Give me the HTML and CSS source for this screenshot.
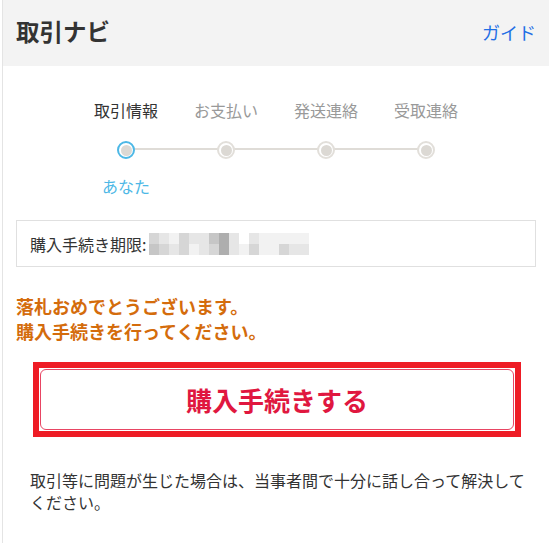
FILE: index.html
```html
<!DOCTYPE html>
<html lang="ja">
<head>
<meta charset="utf-8">
<title>取引ナビ</title>
<link rel="stylesheet" href="styles.css">
</head>
<body>
<div class="panel">
  <header class="head">
    <h1 class="title">取引ナビ</h1>
    <a class="guide" href="#">ガイド</a>
  </header>
  <main class="content">
    <ol class="steps">
      <li class="step active">
        <span class="label">取引情報</span>
        <span class="dot"></span>
        <span class="you">あなた</span>
      </li>
      <li class="step">
        <span class="label">お支払い</span>
        <span class="dot"></span>
      </li>
      <li class="step">
        <span class="label">発送連絡</span>
        <span class="dot"></span>
      </li>
      <li class="step last">
        <span class="label">受取連絡</span>
        <span class="dot"></span>
      </li>
    </ol>

    <div class="deadline">
      <span class="deadline-label">購入手続き期限:</span>
      <span class="mosaic">
        <i class="c3"></i><i class="c2"></i><i class="c1"></i><i class="c3"></i><i class="c2"></i><i class="c2"></i><i class="c4"></i><i class="c5"></i><i class="c2"></i><i class="c0"></i><i class="c2"></i><i class="c1"></i><i class="c1"></i><i class="c1"></i><i class="c1"></i><i class="c1"></i>
        <i class="c4"></i><i class="c3"></i><i class="c2"></i><i class="c3"></i><i class="c1"></i><i class="c2"></i><i class="c3"></i><i class="c5"></i><i class="c2"></i><i class="c1"></i><i class="c3"></i><i class="c1"></i><i class="c1"></i><i class="c3"></i><i class="c2"></i><i class="c2"></i>
      </span>
    </div>

    <p class="congrats">落札おめでとうございます。<br>購入手続きを行ってください。</p>

    <div class="action">
      <button class="buy" type="button">購入手続きする</button>
    </div>

    <p class="note">取引等に問題が生じた場合は、当事者間で十分に話し合って解決してください。</p>
  </main>
</div>
</body>
</html>
```

FILE: styles.css
```css
* { box-sizing: border-box; }
html, body { margin: 0; padding: 0; background: #fff; }
body {
  font-family: "Noto Sans CJK JP", "Noto Sans", "Liberation Sans", sans-serif;
  color: #333;
}
.panel {
  margin-left: 2px;
  border-left: 1px solid #e4e4e4;
  min-height: 543px;
}
.head {
  height: 66px;
  background: #f3f3f3;
  display: flex;
  align-items: center;
  justify-content: space-between;
  padding: 0 13px 2px 13px;
}
.title {
  margin: 0;
  font-size: 23.5px;
  font-weight: bold;
  color: #333;
  line-height: 1;
}
.guide {
  font-size: 18px;
  color: #1f6fe5;
  text-decoration: none;
  line-height: 1;
}
.content {
  padding: 0 13px;
}
.steps {
  list-style: none;
  margin: 0 auto;
  padding: 33px 0 0;
  display: flex;
  width: 400px;
}
.step {
  position: relative;
  width: 100px;
  display: flex;
  flex-direction: column;
  align-items: center;
}
.label {
  font-size: 16px;
  line-height: 22px;
  color: #999;
  white-space: nowrap;
}
.step.active .label { color: #333; }
.step::after {
  content: "";
  position: absolute;
  left: 50%;
  width: 100px;
  top: 49px;
  height: 2px;
  background: #dfdcd7;
}
.step.last::after { display: none; }
.dot {
  position: relative;
  z-index: 1;
  margin-top: 20px;
  width: 18px;
  height: 18px;
  border-radius: 50%;
  border: 2px solid #e2dfda;
  background: #fff;
  display: flex;
  align-items: center;
  justify-content: center;
}
.dot::before {
  content: "";
  width: 11px;
  height: 11px;
  border-radius: 50%;
  background: #dcd9d4;
}
.step.active .dot { border-color: #4db8e6; }
.you {
  margin-top: 16px;
  font-size: 16px;
  line-height: 22px;
  color: #4db8e6;
}
.deadline {
  margin-top: 23px;
  height: 47px;
  border: 1px solid #e0e0e0;
  display: flex;
  align-items: center;
  padding-left: 13px;
}
.deadline-label {
  font-size: 16px;
  color: #333;
  margin-right: 3px;
}
.mosaic {
  display: grid;
  grid-template-columns: repeat(16, 10px);
  grid-auto-rows: 11px;
}
.mosaic i { display: block; }
.c0 { background: #ffffff; }
.c1 { background: #f2f2f2; }
.c2 { background: #e6e6e6; }
.c3 { background: #d6d6d6; }
.c4 { background: #c6c6c6; }
.c5 { background: #aeaeae; }
.congrats {
  margin: 27px 0 0;
  font-size: 18px;
  line-height: 25px;
  font-weight: bold;
  color: #d46c0c;
}
.action {
  margin: 18px 15px 0 17px;
  border: 6px solid #ee1c25;
  padding: 1px;
}
.buy {
  display: block;
  width: 100%;
  height: 61px;
  background: #fff;
  border: 1px solid #e84563;
  border-radius: 6px;
  font-family: inherit;
  font-size: 26px;
  font-weight: bold;
  color: #e0173f;
  cursor: pointer;
}
.note {
  margin: 32px 0 0;
  padding: 0 4px 0 14px;
  font-size: 16px;
  line-height: 22px;
  color: #333;
}
```
